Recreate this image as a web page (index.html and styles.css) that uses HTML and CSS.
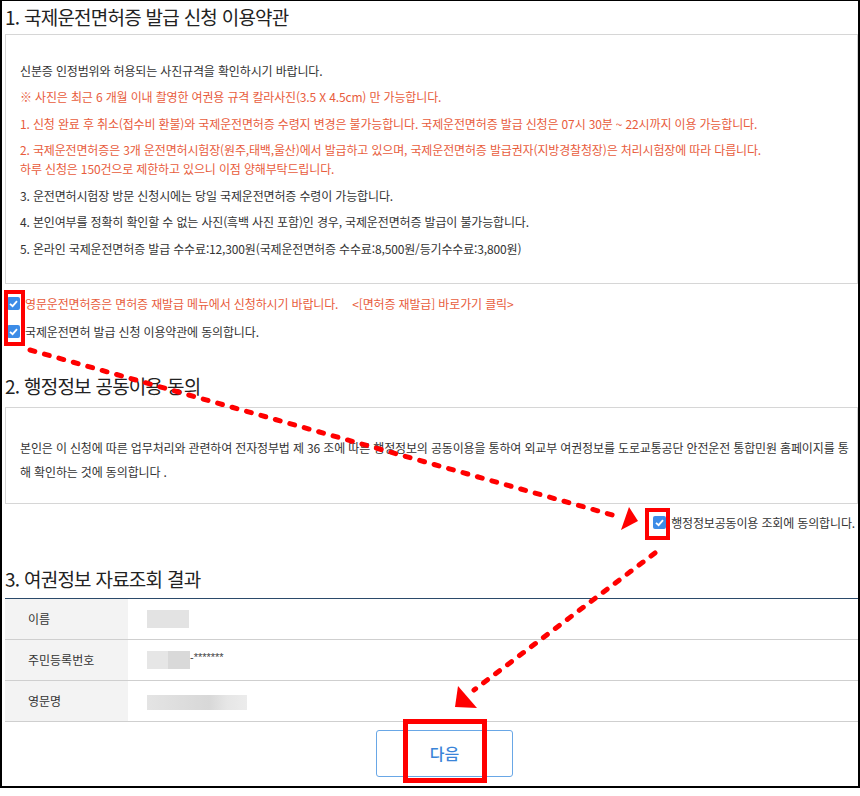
FILE: index.html
```html
<!DOCTYPE html>
<html lang="ko">
  <head>
    <meta charset="UTF-8" />
    <meta name="viewport" content="width=device-width, initial-scale=1.0" />
    <title>국제운전면허증 발급 신청</title>
    <link rel="stylesheet" href="styles.css">
  </head>
  <body>
    <div class="page">
      <h2 class="sec-title first">1. 국제운전면허증 발급 신청 이용약관</h2>
      <div class="terms-box">
        <p>신분증 인정범위와 허용되는 사진규격을 확인하시기 바랍니다.</p>
        <p class="red">※ 사진은 최근 6 개월 이내 촬영한 여권용 규격 칼라사진(3.5 X 4.5cm) 만 가능합니다.</p>
        <p class="red">1. 신청 완료 후 취소(접수비 환불)와 국제운전면허증 수령지 변경은 불가능합니다. 국제운전면허증 발급 신청은 07시 30분 ~ 22시까지 이용 가능합니다.</p>
        <p class="red">2. 국제운전면허증은 3개 운전면허시험장(원주,태백,울산)에서 발급하고 있으며, 국제운전면허증 발급권자(지방경찰청장)은 처리시험장에 따라 다릅니다.<br>하루 신청은 150건으로 제한하고 있으니 이점 양해부탁드립니다.</p>
        <p>3. 운전면허시험장 방문 신청시에는 당일 국제운전면허증 수령이 가능합니다.</p>
        <p>4. 본인여부를 정확히 확인할 수 없는 사진(흑백 사진 포함)인 경우, 국제운전면허증 발급이 불가능합니다.</p>
        <p>5. 온라인 국제운전면허증 발급 수수료:12,300원(국제운전면허증 수수료:8,500원/등기수수료:3,800원)</p>
      </div>

      <div class="check-row red first-check">
        <span class="check"><svg width="13" height="13" viewBox="0 0 13 13"><polyline points="3,6.8 5.6,9.2 10,4.2" /></svg></span>
        <span>영문운전면허증은 면허증 재발급 메뉴에서 신청하시기 바랍니다.</span>
        <span class="shortcut">&lt;[면허증 재발급] 바로가기 클릭&gt;</span>
      </div>
      <div class="check-row">
        <span class="check"><svg width="13" height="13" viewBox="0 0 13 13"><polyline points="3,6.8 5.6,9.2 10,4.2" /></svg></span>
        <span>국제운전면허 발급 신청 이용약관에 동의합니다.</span>
      </div>

      <h2 class="sec-title second">2. 행정정보 공동이용 동의</h2>
      <div class="terms-box share-box">
        <p>본인은 이 신청에 따른 업무처리와 관련하여 전자정부법 제 36 조에 따른 행정정보의 공동이용을 통하여 외교부 여권정보를 도로교통공단 안전운전 통합민원 홈페이지를 통<br>해 확인하는 것에 동의합니다 .</p>
      </div>
      <div class="check-row right-check">
        <span class="check"><svg width="13" height="13" viewBox="0 0 13 13"><polyline points="3,6.8 5.6,9.2 10,4.2" /></svg></span>
        <span>행정정보공동이용 조회에 동의합니다.</span>
      </div>

      <h2 class="sec-title third">3. 여권정보 자료조회 결과</h2>
      <table class="info-table">
        <tr>
          <th>이름</th>
          <td><span class="blur name"></span></td>
        </tr>
        <tr>
          <th>주민등록번호</th>
          <td><span class="blur jumin"></span><span class="stars">-*******</span></td>
        </tr>
        <tr>
          <th>영문명</th>
          <td><span class="blur eng"></span></td>
        </tr>
      </table>

      <div class="btn-area">
        <button class="btn-next">다음</button>
      </div>
    </div>

    <!-- red guide marks drawn over the capture -->
    <svg class="marks" width="860" height="796" viewBox="0 0 860 796">
      <g fill="none" stroke="#f00">
        <rect x="6" y="292" width="17" height="52" stroke-width="4" />
        <rect x="647" y="510" width="21" height="28" stroke-width="4" />
        <rect x="405.5" y="721.5" width="79" height="59" stroke-width="5" />
        <line x1="30" y1="350" x2="616" y2="516" stroke-width="5" stroke-linecap="round" stroke-dasharray="5 10" />
        <line x1="655" y1="553" x2="474" y2="690" stroke-width="5" stroke-linecap="round" stroke-dasharray="5 10" />
      </g>
      <g fill="#f00">
        <polygon points="638,521 629,507 621,530" />
        <polygon points="455,707 458,686 477,708" />
      </g>
    </svg>
  </body>
</html>
```

FILE: styles.css
```css
body {
  margin: 0;
  font-family: "Noto Sans CJK KR", "Noto Sans", sans-serif;
  color: #333;
  background: #fff;
  position: relative;
}
.page {
  width: 860px;
  height: 788px;
  box-sizing: border-box;
  border: 2px solid #000;
  border-top-width: 1px;
  padding-left: 3px;
}
.sec-title {
  margin: 0;
  font-size: 19px;
  font-weight: normal;
  line-height: 28px;
  letter-spacing: -0.75px;
  color: #222;
}
.sec-title.first {
  margin: 1.5px 0 3.5px;
}
.sec-title.second {
  margin: 30px 0 7.5px;
}
.sec-title.third {
  margin: 32px 0 5px;
}
.terms-box {
  border: 1px solid #d6d6d6;
  padding: 25.5px 14px 25px;
  font-size: 12px;
  letter-spacing: -0.15px;
}
.terms-box p {
  margin: 0 0 7.5px;
  line-height: 19px;
}
.terms-box p:last-child {
  margin-bottom: 0;
}
.share-box {
  padding: 27.5px 0 19px 14px;
}
.share-box p {
  line-height: 24px;
  white-space: nowrap;
}
.red {
  color: #e85c3c;
}
.check-row {
  display: flex;
  align-items: center;
  height: 20px;
  margin-top: 8px;
  font-size: 12px;
  letter-spacing: -0.15px;
}
.check-row.first-check {
  margin-top: 10px;
  padding-left: 2px;
}
.check-row.first-check + .check-row {
  padding-left: 2px;
}
.check-row.right-check {
  justify-content: flex-end;
  margin-top: 9px;
  padding-right: 3px;
}
.check {
  width: 13px;
  height: 13px;
  margin-right: 5px;
  background: #3c8ce7;
  border-radius: 2px;
  display: inline-flex;
}
.check polyline {
  fill: none;
  stroke: #fff;
  stroke-width: 1.8;
}
.shortcut {
  margin-left: 14px;
}
.info-table {
  width: 100%;
  border-collapse: collapse;
  border-top: 1px solid #2b4a6a;
  font-size: 12px;
}
.info-table th,
.info-table td {
  height: 40px;
  padding: 0;
  border-bottom: 1px solid #cfcfcf;
  text-align: left;
}
.info-table th {
  width: 100px;
  padding-left: 23px;
  background: #f3f3f3;
  font-weight: normal;
  color: #333;
}
.info-table td {
  padding-left: 19px;
}
.blur {
  display: inline-block;
  vertical-align: middle;
  height: 18px;
  background: #e3e3e3;
}
.blur.name {
  width: 42px;
}
.blur.jumin {
  width: 43px;
  background: linear-gradient(90deg, #e6e6e6 0, #e6e6e6 21px, #d9d9d9 21px);
}
.blur.eng {
  width: 100px;
  height: 15px;
  background: linear-gradient(90deg, #e4e4e4 0, #dcdcdc 40%, #d8d8d8 62%, #e6e6e6 80%, #ececec 100%);
}
.stars {
  vertical-align: middle;
  font-family: "Liberation Sans", sans-serif;
  font-size: 11px;
  color: #444;
  position: relative;
  top: -3px;
}
.btn-area {
  display: flex;
  justify-content: center;
  padding-left: 26px;
  margin-top: 8px;
}
.btn-next {
  width: 137px;
  height: 47px;
  border: 1px solid #69a7e6;
  border-radius: 3px;
  background: #fff;
  color: #3a84d8;
  font-family: "Noto Sans CJK KR", sans-serif;
  font-size: 16px;
  font-weight: 500;
}
.marks {
  position: absolute;
  left: 0;
  top: 0;
  pointer-events: none;
}
```
